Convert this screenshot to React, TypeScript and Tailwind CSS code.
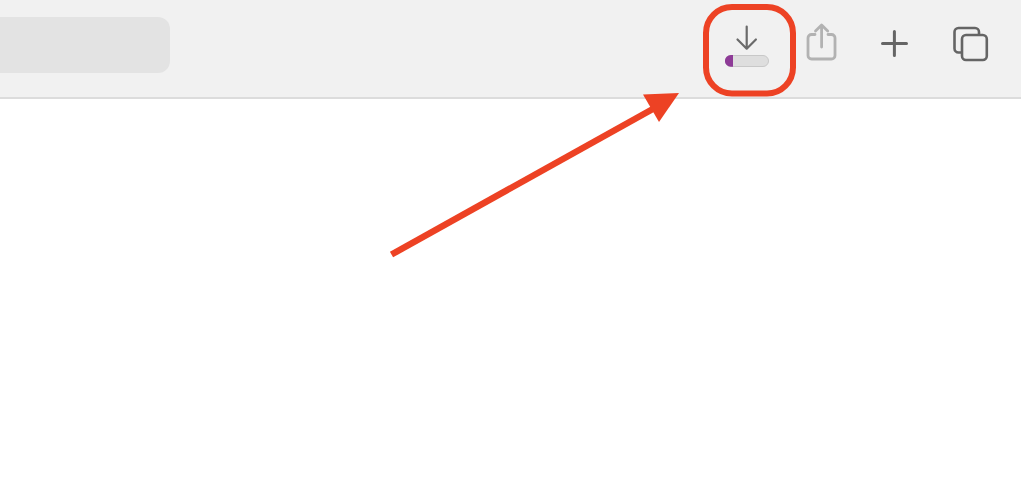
export default function App() {
  return (
    <div className="relative h-[481px] w-[1021px] overflow-hidden bg-white">
      <header className="flex h-[99px] items-stretch border-b-2 border-[#dcdcdc] bg-[#f1f1f1]">
        <div className="mt-[17px] h-[56px] w-[170px] rounded-r-[12px] bg-[#e3e3e3]" />
        <div className="ml-auto mr-[31px] flex">
          <svg width="44" height="97" viewBox="725 0 44 97" fill="none" className="mr-[36px]">
            <path d="M746.7 26.5V48.5M737.5 39.5L746.7 48.7L755.9 39.5" stroke="#6a6a6a" strokeWidth="2.2" strokeLinecap="round" strokeLinejoin="round" />
            <rect x="725.5" y="55.5" width="43" height="11" rx="5.5" fill="#dedede" stroke="#c8c8c8" />
            <path d="M733 55H730.8A5.8 5.8 0 0 0 730.8 66.8H733Z" fill="#8e3b97" />
          </svg>
          <svg width="33" height="97" viewBox="805 0 33 97" fill="none" className="mr-[42px]">
            <path d="M815 34.5H811.5A3.5 3.5 0 0 0 808 38V55.5A3.5 3.5 0 0 0 811.5 59H831.5A3.5 3.5 0 0 0 835 55.5V38A3.5 3.5 0 0 0 831.5 34.5H828" stroke="#b2b2b2" strokeWidth="2.8" strokeLinecap="round" />
            <path d="M821.6 47V25.5M815.5 31L821.6 25L827.7 31" stroke="#b2b2b2" strokeWidth="2.8" strokeLinecap="round" strokeLinejoin="round" />
          </svg>
          <svg width="29" height="97" viewBox="880 0 29 97" fill="none" className="mr-[43px]">
            <path d="M894.4 31.5V55.5M882.5 43.4H906.5" stroke="#656565" strokeWidth="3" strokeLinecap="round" />
          </svg>
          <svg width="38" height="97" viewBox="952 0 38 97" fill="none">
            <path d="M961 52.5H958.5A4 4 0 0 1 954.5 48.5V32A4 4 0 0 1 958.5 28H975A4 4 0 0 1 979 32V34.5" stroke="#656565" strokeWidth="2.6" />
            <rect x="962" y="35" width="24.8" height="25" rx="4" stroke="#656565" strokeWidth="2.6" />
          </svg>
        </div>
      </header>
      <svg className="pointer-events-none absolute left-0 top-0" width="1021" height="481" viewBox="0 0 1021 481" fill="none">
        <rect x="706" y="7" width="87" height="86.5" rx="26" stroke="#ed4224" strokeWidth="6" />
        <path d="M391.5 254.5L660 105" stroke="#ed4224" strokeWidth="6.5" />
        <path d="M643 94.5L679 93L659 122Z" fill="#ed4224" />
      </svg>
    </div>
  );
}
